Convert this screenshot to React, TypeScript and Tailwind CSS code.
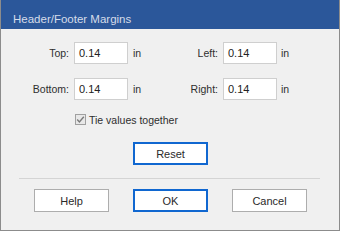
import React from 'react'

// Header/Footer margins dialog
const FONT = { fontFamily: '"Liberation Sans", Arial, sans-serif' }

function Field({ value }: { value: string }) {
  return (
    <div className="w-[54px] h-[22px] bg-white border border-[#cfcfcf] flex items-center pl-[4px] text-[11px] text-[#222]">
      {value}
    </div>
  )
}

function MarginRow({ leftLabel, rightLabel, value, className = '' }: {
  leftLabel: string
  rightLabel: string
  value: string
  className?: string
}) {
  return (
    <div className={`flex items-center h-[22px] ${className}`}>
      <span className="w-[68px] text-right">{leftLabel}</span>
      <div className="ml-[5px]"><Field value={value} /></div>
      <span className="ml-[5px] w-[20px]">in</span>
      <span className="w-[65px] text-right">{rightLabel}</span>
      <div className="ml-[5px]"><Field value={value} /></div>
      <span className="ml-[4px]">in</span>
    </div>
  )
}

function Button({ label, primary = false, className = '' }: {
  label: string
  primary?: boolean
  className?: string
}) {
  return (
    <button
      className={`w-[75px] h-[23px] flex items-center justify-center text-[11px] text-[#2a2a2a] ${
        primary ? 'bg-white border-2 border-[#1067d0]' : 'bg-white border border-[#adadad]'
      } ${className}`}
    >
      {label}
    </button>
  )
}

export default function App() {
  return (
    <div
      className="w-[340px] h-[231px] bg-[#f0f0f0] border-x border-b border-[#8c8c8c] flex flex-col overflow-hidden text-[10.5px] text-[#2e2e2e] leading-[14px]"
      style={FONT}
    >
      {/* title bar */}
      <div className="h-[29px] shrink-0 bg-[#2b579a] pl-[12px] pt-[12px] text-[11.5px] leading-[14px] text-[#d5dce9]">
        Header/Footer Margins
      </div>

      <MarginRow leftLabel="Top:" rightLabel="Left:" value="0.14" className="mt-[13px]" />
      <MarginRow leftLabel="Bottom:" rightLabel="Right:" value="0.14" className="mt-[14px]" />

      <div className="flex items-center h-[17px] mt-[11px] ml-[74px]">
        <div className="w-[11px] h-[11px] border border-[#a0a0a0] bg-[#e8e8e8] flex items-center justify-center">
          <svg width="9" height="9" viewBox="0 0 9 9">
            <path d="M1.2 4.6 L3.4 6.9 L7.8 1.8" fill="none" stroke="#7a7a7a" strokeWidth="1.4" />
          </svg>
        </div>
        <span className="ml-[3px]">Tie values together</span>
      </div>

      <Button label="Reset" primary className="mt-[14px] ml-[132px]" />

      <div className="mt-[13px] ml-[18px] mr-[19px] h-px bg-[#d4d4d4]" />

      <div className="flex mt-[10px] ml-[33px] gap-[24px]">
        <Button label="Help" />
        <Button label="OK" primary />
        <Button label="Cancel" />
      </div>
    </div>
  )
}
